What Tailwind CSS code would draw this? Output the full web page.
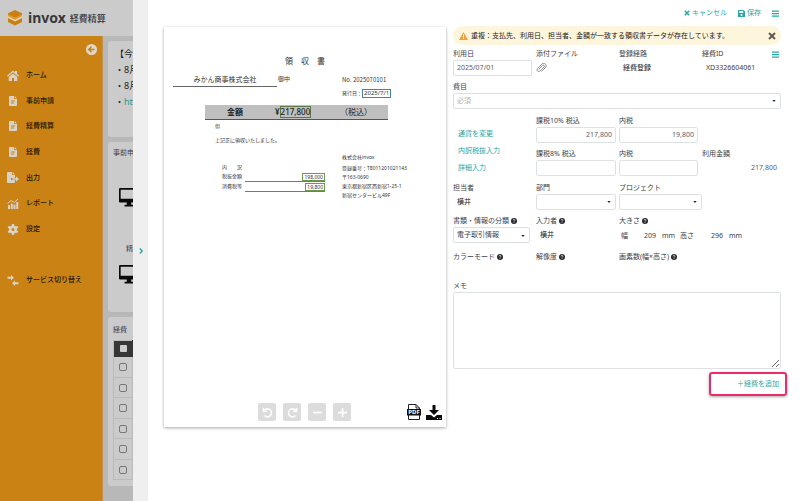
<!DOCTYPE html>
<html lang="ja">
<head>
<meta charset="utf-8">
<meta name="viewport" content="width=device-width, initial-scale=1">
<title>invox 経費精算</title>
<script src="https://cdn.jsdelivr.net/npm/@tailwindcss/browser@4"></script>
</head>
<body class="font-['Noto_Sans','Noto_Sans_CJK_JP',sans-serif] text-[7px] leading-[12px] text-[#3c4248] bg-[#b8b8b8]">
<svg class="hidden" aria-hidden="true">
  <symbol id="doc" viewBox="0 0 16 20"><path fill="currentColor" fill-rule="evenodd" d="M2 0h8v6h6v12a2 2 0 0 1-2 2H2a2 2 0 0 1-2-2V2a2 2 0 0 1 2-2zM4 9v2h8V9zM4 13v2h6v-2zM11.500 0L16 4.500h-4.500z"/></symbol>
  <symbol id="bars" viewBox="0 0 14 14"><path fill="currentColor" d="M0 1h14v2.500H0zM0 6h14v2.500H0zM0 11h14v2.500H0z"/></symbol>
  <symbol id="help" viewBox="0 0 16 16"><circle cx="8" cy="8" r="8" fill="#23282d"/><path d="M5.500 6.200C5.500 3 10.500 3 10.500 6c0 1.800-2.500 1.800-2.500 3.600" fill="none" stroke="#fff" stroke-width="2"/><circle cx="8" cy="12" r="1.300" fill="#fff"/></symbol>
  <symbol id="caret" viewBox="0 0 10 6"><path d="M0 0h10L5 6z" fill="#23282d"/></symbol>
  <symbol id="cross" viewBox="0 0 12 12"><path d="M1.500 1.500l9 9M10.500 1.500l-9 9" stroke="currentColor" stroke-width="3" fill="none"/></symbol>
  <symbol id="monitor" viewBox="0 0 36 36"><path fill="#0a0a0a" fill-rule="evenodd" d="M2 2h32a2 2 0 0 1 2 2v22a2 2 0 0 1-2 2H22v4h4v3H10v-3h4v-4H2a2 2 0 0 1-2-2V4a2 2 0 0 1 2-2zm1 3v16h30V5z"/></symbol>
</svg>

<div class="relative flex flex-col min-h-screen overflow-hidden">
  <header class="flex items-center h-9 bg-[#cbcbcb] pl-[7px] gap-[5px]">
    <svg class="size-4" viewBox="0 0 32 32"><path fill="#c98010" d="M16 0l14 6.500v3L16 16 2 9.500v-3z"/><path fill="#e39a2d" d="M2 9l14 7 14-7v4l-14 7-14-7z"/><path fill="#efd9b5" d="M2 13l14 7 14-7v3l-14 7-14-7z"/><path fill="#c98010" d="M2 16l14 7 14-7v8l-14 7-14-7z"/></svg>
    <h1 class="flex items-center gap-1 text-[#383838]"><span class="font-['Noto_Sans'] font-bold text-[14px]">invox</span><span class="font-medium text-[9px] pt-px">経費精算</span></h1>
  </header>
  <div class="flex grow">
    <nav class="w-[103px] shrink-0 bg-[#cb8215] border-r border-[#c3924a] text-[#221808] font-medium">
      <div class="flex justify-end pt-2 pr-[5px]">
        <button aria-label="メニューを閉じる" class="block"><svg class="size-[11px]" viewBox="0 0 22 22"><circle cx="11" cy="11" r="11" fill="#dcd8d0"/><path d="M17 11H6M11 5.500L5.500 11l5.500 5.500" fill="none" stroke="#cb8215" stroke-width="3"/></svg></button>
      </div>
      <ul class="pt-[7px]">
        <li><a href="#" class="flex items-center gap-[7px] pl-[7px] h-[26px]"><svg class="w-3 h-[11px]" viewBox="0 0 24 22"><path fill="#d6d3cc" d="M12 1l4 3.500V2h4v6l4 3.500-1.500 1.800L12 4.600 1.500 13.300 0 11.500zM12 7l8.500 7v8H14v-6h-4v6H3.500v-8z"/></svg>ホーム</a></li>
        <li><a href="#" class="flex items-center gap-[9px] pl-[9px] h-[25px]"><svg class="w-2 h-[10px] text-[#d6d3cc]"><use href="#doc"/></svg>事前申請</a></li>
        <li><a href="#" class="flex items-center gap-[9px] pl-[9px] h-[26px]"><svg class="w-2 h-[10px] text-[#d6d3cc]"><use href="#doc"/></svg>経費精算</a></li>
        <li><a href="#" class="flex items-center gap-[9px] pl-[9px] h-[26px]"><svg class="w-2 h-[10px] text-[#d6d3cc]"><use href="#doc"/></svg>経費</a></li>
        <li><a href="#" class="flex items-center gap-[7px] pl-[7px] h-[25px]"><svg class="w-3 h-[11px]" viewBox="0 0 24 22"><path fill="#d6d3cc" d="M2 0h8v6h6v6H8v4h8v4a2 2 0 0 1-2 2H2a2 2 0 0 1-2-2V2a2 2 0 0 1 2-2zM11.500 0L16 4.500h-4.500zM18 9l6 5-6 5v-3.500h-7v-3h7z"/></svg>出力</a></li>
        <li><a href="#" class="flex items-center gap-[7px] pl-[7px] h-[26px]"><svg class="w-3 h-[11px]" viewBox="0 0 24 22"><path fill="#d6d3cc" d="M2 14h4v8H2zM7.500 11h4v11h-4zM13 13h4v9h-4zM18.500 8h4v14h-4z"/><path d="M1 11l7-6 6 4 8-7" fill="none" stroke="#d6d3cc" stroke-width="2"/></svg>レポート</a></li>
        <li><a href="#" class="flex items-center gap-[7px] pl-[7px] h-[26px]"><svg class="w-3 h-[11px]" viewBox="0 0 24 22"><circle cx="12" cy="11" r="5.500" fill="none" stroke="#d6d3cc" stroke-width="5"/><path d="M12 0v5M12 17v5M2.500 5.500l4.500 2.600M17 13.900l4.500 2.600M2.500 16.500L7 13.900M17 8.100l4.500-2.600" stroke="#d6d3cc" stroke-width="4.500"/></svg>設定</a></li>
        <li class="pt-[25px]"><a href="#" class="flex items-center gap-[7px] pl-[7px] h-[26px]"><svg class="w-3 h-[11px]" viewBox="0 0 24 22"><path fill="#d6d3cc" d="M8 0l6 5.500L8 11V7.500H1v-4h7zM16 11l-6 5.500 6 5.500v-3.500h7v-4h-7z"/></svg>サービス切り替え</a></li>
      </ul>
    </nav>
    <main class="flex flex-col grow gap-[5px] pt-[5px] pl-[5px] pr-[5px]">
      <section class="h-24 rounded-[3px] bg-[#cbcbcb] pt-[5px] pl-[7px] text-[9px] leading-[16px] text-[#222]">
        <p>【今月のお知らせ】</p>
        <p>・8月の締め日</p>
        <p>・8月の休業日</p>
        <p>・<a href="#" class="text-[#2a9a96]">https://invox.jp</a></p>
      </section>
      <section class="h-[170px] rounded-[3px] bg-[#cbcbcb] pt-[5px] pl-[5px]">
        <h2>事前申請</h2>
        <svg class="mt-7 ml-[6px] size-5"><use href="#monitor"/></svg>
        <p class="pl-[13px] mt-9">精算</p>
        <svg class="mt-[9px] ml-[6px] size-5"><use href="#monitor"/></svg>
      </section>
      <section class="h-[169px] rounded-[3px] bg-[#cbcbcb] pt-[7px] pl-[5px]">
        <h2>経費</h2>
        <table class="mt-1 w-full border-collapse border border-[#bbb]">
          <thead><tr class="h-4 bg-[#363636]"><th class="w-[19px] p-0 border-r border-[#363636]"><input type="checkbox" aria-label="すべて選択" class="appearance-none block mx-auto size-[7px] bg-[#cbcbcb] rounded-[1px]"></th><th></th></tr></thead>
          <tbody>
            <tr class="h-[21px] border-b border-[#bbb]"><td class="p-0 border-r border-[#bbb]"><input type="checkbox" aria-label="経費1" class="appearance-none block mx-auto size-2 border border-[#777] rounded-[2px]"></td><td></td></tr>
            <tr class="h-[20px] border-b border-[#bbb]"><td class="p-0 border-r border-[#bbb]"><input type="checkbox" aria-label="経費2" class="appearance-none block mx-auto size-2 border border-[#777] rounded-[2px]"></td><td></td></tr>
            <tr class="h-[21px] border-b border-[#bbb]"><td class="p-0 border-r border-[#bbb]"><input type="checkbox" aria-label="経費3" class="appearance-none block mx-auto size-2 border border-[#777] rounded-[2px]"></td><td></td></tr>
            <tr class="h-[20px] border-b border-[#bbb]"><td class="p-0 border-r border-[#bbb]"><input type="checkbox" aria-label="経費4" class="appearance-none block mx-auto size-2 border border-[#777] rounded-[2px]"></td><td></td></tr>
            <tr class="h-[21px] border-b border-[#bbb]"><td class="p-0 border-r border-[#bbb]"><input type="checkbox" aria-label="経費5" class="appearance-none block mx-auto size-2 border border-[#777] rounded-[2px]"></td><td></td></tr>
            <tr class="h-[20px] border-b border-[#bbb]"><td class="p-0 border-r border-[#bbb]"><input type="checkbox" aria-label="経費6" class="appearance-none block mx-auto size-2 border border-[#777] rounded-[2px]"></td><td></td></tr>
          </tbody>
        </table>
      </section>
    </main>
  </div>

  <!-- Expense drawer over the dimmed dashboard -->
  <div role="dialog" aria-label="経費" class="absolute inset-y-0 right-0 left-[133px] flex bg-white">
    <button aria-label="パネルを閉じる" class="flex w-[15px] shrink-0 items-center justify-center bg-[#efefef] text-[#2aa6a3]"><svg class="w-1 h-[6px]" viewBox="0 0 8 12"><path d="M1.500 1l5 5-5 5" fill="none" stroke="currentColor" stroke-width="2.500"/></svg></button>
    <div class="flex flex-col grow pl-4 pr-[19px]">
      <div class="flex h-[26px] items-center justify-end gap-[11px] text-[#2aa6a3]">
        <button class="flex items-center gap-[2px]"><svg class="size-[6px]"><use href="#cross"/></svg>キャンセル</button>
        <button class="flex items-center gap-[2px]"><svg class="size-[7px]" viewBox="0 0 14 14"><path fill="currentColor" fill-rule="evenodd" d="M1 0h10l3 3v10a1 1 0 0 1-1 1H1a1 1 0 0 1-1-1V1a1 1 0 0 1 1-1zM2.500 2v4h8V2zM7 8a2 2 0 1 0 0 4 2 2 0 0 0 0-4z"/></svg>保存</button>
        <button aria-label="メニュー" class="mr-[2px]"><svg class="size-[7px]"><use href="#bars"/></svg></button>
      </div>
      <div class="flex items-start gap-[7px]">
        <article class="flex flex-col w-[282px] h-[400px] shrink-0 mt-px bg-white shadow-[0_1px_3px_rgba(0,0,0,0.35)] text-[5px] leading-[9px] text-[#333]">
          <h2 class="mt-7 text-center text-[8px] leading-[12px]">領　収　書</h2>
          <div class="flex pl-[9px] pt-[6px]">
            <p class="w-[104px] h-[14px] border-b border-[#666] text-center text-[7px] leading-[13px]">みかん商事株式会社</p>
            <p class="w-[65px] pl-[1px] text-[6px] leading-[13px]">御中</p>
            <div>
              <p class="leading-[13px] text-[6px] font-['Noto_Sans_CJK_JP']">No. 2025070101</p>
              <p class="flex items-center h-[15px]">発行日：<span class="border border-[#4a7dab] px-px h-[9px] leading-[7px] text-[6px]">2025/7/1</span></p>
            </div>
          </div>
          <div class="mt-[4px] ml-[41px] mr-[58px] flex items-center h-[15px] bg-[#bfbfbf] border-b border-[#555] text-[8px] leading-[12px] text-[#222]">
            <b class="w-[70px] pl-[22px]">金額</b>
            <p class="flex items-center w-[65px] font-medium">¥<span class="border border-[#5c7a48] leading-[10px]">217,800</span></p>
            <p>（税込）</p>
          </div>
          <p class="ml-[51px] mt-[2px]">但</p>
          <p class="ml-[51px] mt-[5px]">上記正に領収いたしました。</p>
          <div class="flex pl-[58px] pt-[8px]">
            <dl class="w-[103px] pt-[10px] grid grid-cols-[23px_1fr] auto-rows-min">
              <dt class="col-span-2">内　　訳</dt>
              <dt>税抜金額</dt><dd class="flex justify-end items-center h-[10px] border-b border-[#777]"><span class="border border-[#6b9a4a] px-px leading-[6px]">198,000</span></dd>
              <dt>消費税等</dt><dd class="flex justify-end items-center h-[10px] border-b border-[#777]"><span class="border border-[#6b9a4a] px-px leading-[6px]">19,800</span></dd>
            </dl>
            <address class="pl-[17px] not-italic"><p class="pb-[2px]">株式会社invox</p><p>登録番号：T8011201021143</p><p>〒163-0690</p><p>東京都新宿区西新宿1-25-1</p><p>新宿センタービル49F</p></address>
          </div>
          <div class="mt-auto mb-[6px] flex items-center pl-[94px] pr-[4px] gap-[7px] text-white">
            <button aria-label="左に回転" class="grid place-items-center size-[18px] bg-[#dcdcdc] rounded-[2px]"><svg class="size-[11px]" viewBox="0 0 22 22"><path d="M3 2v7h7M4 8a8 8 0 1 1 1 9" fill="none" stroke="currentColor" stroke-width="3"/></svg></button>
            <button aria-label="右に回転" class="grid place-items-center size-[18px] bg-[#dcdcdc] rounded-[2px]"><svg class="size-[11px]" viewBox="0 0 22 22"><path d="M19 2v7h-7M18 8a8 8 0 1 0-1 9" fill="none" stroke="currentColor" stroke-width="3"/></svg></button>
            <button aria-label="縮小" class="grid place-items-center size-[18px] bg-[#dcdcdc] rounded-[2px]"><svg class="size-[9px]" viewBox="0 0 18 18"><path d="M0 9h18" stroke="currentColor" stroke-width="3.500"/></svg></button>
            <button aria-label="拡大" class="grid place-items-center size-[18px] bg-[#dcdcdc] rounded-[2px]"><svg class="size-[9px]" viewBox="0 0 18 18"><path d="M0 9h18M9 0v18" stroke="currentColor" stroke-width="3.500"/></svg></button>
            <button aria-label="PDFを開く" class="ml-auto relative text-white"><svg class="w-[14px] h-[16px]" viewBox="0 0 28 32"><path d="M3 10V1h15l7 7v2M3 22v9h22v-9M18 1v7h7" fill="none" stroke="#222" stroke-width="2"/><path fill="#111" d="M0 10h28v13H0z"/></svg><span class="absolute inset-x-0 top-[4px] text-center text-[6px] leading-[8px] font-bold">PDF</span></button>
            <button aria-label="ダウンロード" class="-ml-[2px]"><svg class="w-4 h-[15px]" viewBox="0 0 32 30"><path fill="#0a0a0a" fill-rule="evenodd" d="M13 0h6v10h7L16 20 6 10h7zM1 20h9l6 5 6-5h9a1 1 0 0 1 1 1v8a1 1 0 0 1-1 1H1a1 1 0 0 1-1-1v-8a1 1 0 0 1 1-1zM22 26v2h2v-2zM27 26v2h2v-2z"/></svg></button>
          </div>
        </article>

        <form class="grow flex flex-col gap-[5px]">
          <div role="alert" class="flex items-center h-[19px] -mb-[2px] rounded-full bg-[#fdf6dc] pl-[6px] pr-[5px] text-[#1c2024]">
            <svg class="w-[9px] h-2 mr-[3px]" viewBox="0 0 18 16"><path d="M9 0l9 16H0z" fill="#f0a03c"/><path d="M9 5v5.500M9 12v2" stroke="#fff" stroke-width="2"/></svg>
            重複：支払先、利用日、担当者、金額が一致する領収書データが存在しています。
            <button type="button" aria-label="閉じる" class="ml-auto text-[#5f5a50]"><svg class="size-2"><use href="#cross"/></svg></button>
          </div>
          <div class="grid grid-cols-[repeat(3,minmax(0,83fr))_minmax(0,79fr)] h-7">
            <div class="flex flex-col"><label for="date">利用日</label><input id="date" value="2025/07/01" class="mr-1 h-4 min-w-0 border border-[#dde1e6] rounded-[2px] px-[3px] pb-px text-[#5a6067]"></div>
            <div><p>添付ファイル</p><button type="button" aria-label="添付" class="mt-[3px] block"><svg class="w-[11px] h-[10px]" viewBox="0 0 22 20"><path d="M5 13L13 5c3-2 5 1 3 3l-8 8c-4 3-8-2-5-5L12 2c5-4 11 2 7 7l-8 8" fill="none" stroke="#777" stroke-width="1.600"/></svg></button></div>
            <div><p>登録経路</p><p class="pl-1 leading-[15px] text-[#1c2024]">経費登録</p></div>
            <div><p class="flex justify-between items-center pr-[2px]">経費ID<button type="button" aria-label="項目メニュー" class="text-[#2aa6a3]"><svg class="size-[7px]"><use href="#bars"/></svg></button></p><p class="pl-1 leading-[15px]">XD3326604061</p></div>
          </div>
          <div class="relative flex flex-col"><label for="item">費目</label><select id="item" class="appearance-none h-4 border border-[#dde1e6] rounded-[2px] px-[3px] text-[#b3b3b3]"><option>必須</option></select><svg class="absolute right-[5px] bottom-[7px] w-1 h-[2px] pointer-events-none"><use href="#caret"/></svg></div>
          <div class="grid grid-cols-[repeat(3,minmax(0,83fr))_minmax(0,79fr)] mt-px">
            <div class="flex flex-col items-start gap-[5px] pt-[13px] text-[#2aa6a3] pl-[5px]"><button type="button">通貨を変更</button><button type="button">内訳税抜入力</button><button type="button">詳細入力</button></div>
            <div class="flex flex-col gap-[5px]">
              <div class="flex flex-col"><label for="t10">課税10% 税込</label><input id="t10" value="217,800" class="mr-[3px] h-4 min-w-0 border border-[#dde1e6] rounded-[2px] px-[3px] pb-px text-right text-[#5a6067]"></div>
              <div class="flex flex-col"><label for="t8">課税8% 税込</label><input id="t8" class="mr-[3px] h-4 min-w-0 border border-[#dde1e6] rounded-[2px] px-[3px] text-right"></div>
            </div>
            <div class="flex flex-col gap-[5px]">
              <div class="flex flex-col"><label for="u10">内税</label><input id="u10" value="19,800" class="mr-1 h-4 min-w-0 border border-[#dde1e6] rounded-[2px] px-[3px] pb-px text-right text-[#5a6067]"></div>
              <div class="flex flex-col"><label for="u8">内税</label><input id="u8" class="mr-1 h-4 min-w-0 border border-[#dde1e6] rounded-[2px] px-[3px] text-right"></div>
            </div>
            <div class="flex flex-col justify-end"><p>利用金額</p><p class="text-right pr-1 leading-[16px] text-[#5a6067]">217,800</p></div>
          </div>
          <div class="grid grid-cols-[repeat(3,minmax(0,83fr))_minmax(0,79fr)] mt-px">
            <div><p>担当者</p><p class="pl-1 leading-[15px] text-[#1c2024]">横井</p></div>
            <div class="flex flex-col relative mr-[3px]"><label for="dept">部門</label><select id="dept" class="appearance-none h-4 border border-[#dde1e6] rounded-[2px] px-[3px]"><option></option></select><svg class="absolute right-[5px] bottom-[7px] w-1 h-[2px] pointer-events-none"><use href="#caret"/></svg></div>
            <div class="flex flex-col relative"><label for="proj">プロジェクト</label><select id="proj" class="appearance-none h-4 border border-[#dde1e6] rounded-[2px] px-[3px]"><option></option></select><svg class="absolute right-[5px] bottom-[7px] w-1 h-[2px] pointer-events-none"><use href="#caret"/></svg></div>
          </div>
          <div class="grid grid-cols-[repeat(3,minmax(0,83fr))_minmax(0,79fr)]">
            <div class="flex flex-col relative mr-[6px]"><label for="kind" class="flex items-center gap-[2px] whitespace-nowrap">書類・情報の分類<svg class="size-[6px]"><use href="#help"/></svg></label><select id="kind" class="appearance-none h-4 border border-[#dde1e6] rounded-[2px] px-[3px]"><option>電子取引情報</option></select><svg class="absolute right-[5px] bottom-[7px] w-1 h-[2px] pointer-events-none"><use href="#caret"/></svg></div>
            <div><p class="flex items-center gap-[2px]">入力者<svg class="size-[6px]"><use href="#help"/></svg></p><p class="pl-1 leading-[15px] text-[#1c2024]">横井</p></div>
            <div class="col-span-2"><p class="flex items-center gap-[2px]">大きさ<svg class="size-[6px]"><use href="#help"/></svg></p><p class="flex pl-[2px] leading-[17px]"><span class="w-[23px]">幅</span><span class="w-[18px]">209</span><span class="w-[18px]">mm</span><span class="w-[31px]">高さ</span><span class="w-[18px]">296</span><span>mm</span></p></div>
          </div>
          <div class="grid grid-cols-[repeat(3,minmax(0,83fr))_minmax(0,79fr)] mt-[2px] h-6">
            <p class="flex h-3 items-center gap-[2px]">カラーモード<svg class="size-[6px]"><use href="#help"/></svg></p>
            <p class="flex h-3 items-center gap-[2px]">解像度<svg class="size-[6px]"><use href="#help"/></svg></p>
            <p class="flex h-3 items-center gap-[2px] whitespace-nowrap">画素数(幅×高さ)<svg class="size-[6px]"><use href="#help"/></svg></p>
          </div>
          <div class="flex flex-col"><label for="memo">メモ</label><textarea id="memo" class="h-[77px] border border-[#dde1e6] rounded-[2px] p-[3px] resize"></textarea></div>
          <div class="flex justify-end -mt-[2px] -mr-[6px]"><button type="button" class="w-[78px] h-6 rounded-[3px] border-2 border-[#ec2c68] shadow-[0_1px_3px_rgba(0,0,0,0.35)] pr-[6px] text-right text-[#2aa6a3]">＋経費を追加</button></div>
        </form>
      </div>
    </div>
  </div>
</div>
</body>
</html>
